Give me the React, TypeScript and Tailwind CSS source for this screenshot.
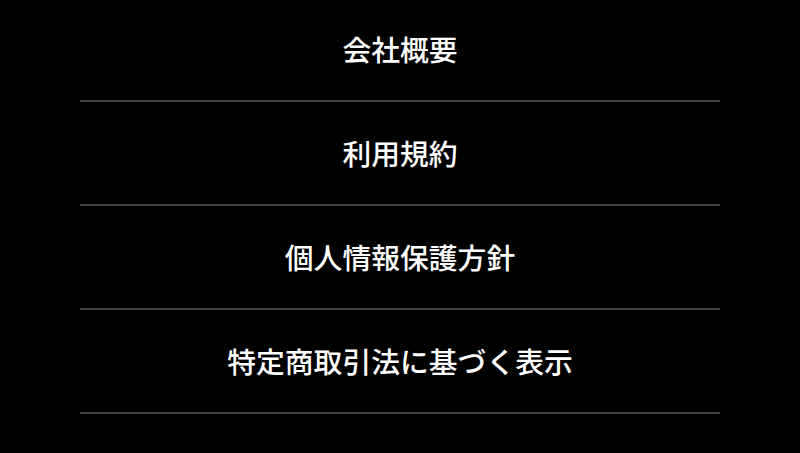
const items = ["会社概要", "利用規約", "個人情報保護方針", "特定商取引法に基づく表示"];

export default function App() {
  return (
    <div className="min-h-[453px] overflow-hidden bg-black font-['Noto_Sans_CJK_JP',sans-serif]">
      <ul className="mx-auto -mt-[2px] w-[640px]">
        {items.map((label) => (
          <li
            key={label}
            className="flex h-[104px] items-center justify-center border-b-2 border-[#444444] text-[28.8px] font-medium text-white"
          >
            {label}
          </li>
        ))}
      </ul>
    </div>
  );
}
